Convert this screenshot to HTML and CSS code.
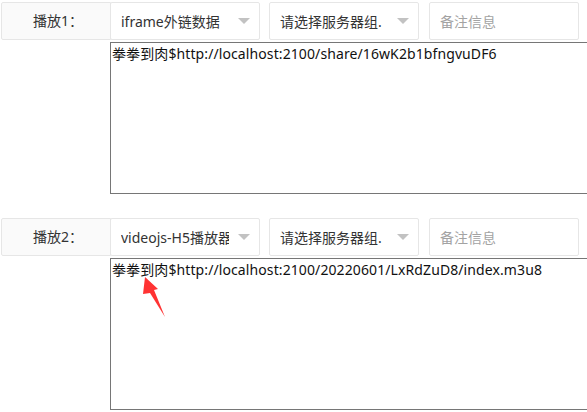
FILE: index.html
```html
<!DOCTYPE html>
<html lang="zh-CN">
<head>
    <meta charset="UTF-8">
    <title>播放设置</title>
    <link rel="stylesheet" href="styles.css">
</head>
<body>
    <div class="play-list">
        <div class="play-item">
            <div class="form-row">
                <label class="form-label">播放1：</label>
                <div class="select-box">
                    <input class="select-title" type="text" readonly value="iframe外链数据">
                    <i class="select-arrow"></i>
                </div>
                <div class="select-box">
                    <input class="select-title" type="text" readonly value="请选择服务器组.">
                    <i class="select-arrow"></i>
                </div>
                <input class="note-input" type="text" placeholder="备注信息">
            </div>
            <textarea class="play-url">拳拳到肉$http://localhost:2100/share/16wK2b1bfngvuDF6</textarea>
        </div>

        <div class="play-item">
            <div class="form-row">
                <label class="form-label">播放2：</label>
                <div class="select-box">
                    <input class="select-title" type="text" readonly value="videojs-H5播放器">
                    <i class="select-arrow"></i>
                </div>
                <div class="select-box">
                    <input class="select-title" type="text" readonly value="请选择服务器组.">
                    <i class="select-arrow"></i>
                </div>
                <input class="note-input" type="text" placeholder="备注信息">
            </div>
            <textarea class="play-url">拳拳到肉$http://localhost:2100/20220601/LxRdZuD8/index.m3u8</textarea>
        </div>
    </div>

    <!-- 标注箭头 -->
    <svg class="mark-arrow" width="30" height="46" viewBox="0 0 30 46">
        <polygon points="5,1 18,13 14,14 25,41 10,17 3,18" fill="#ff3333"/>
    </svg>
</body>
</html>
```

FILE: styles.css
```css
body {
    margin: 0;
    padding: 2px 0 0 1px;
    overflow: hidden;
    background: #fff;
    font-family: "Noto Sans", "Noto Sans CJK SC", sans-serif;
    font-size: 14px;
    color: #333;
}

.play-item {
    margin-bottom: 24px;
}

.play-item:last-child {
    margin-bottom: 0;
}

.form-row {
    display: flex;
    height: 38px;
    margin-bottom: 2px;
}

.form-label {
    box-sizing: border-box;
    width: 110px;
    height: 38px;
    line-height: 36px;
    padding-left: 4px;
    text-align: center;
    background: #fafafa;
    border: 1px solid #e6e6e6;
    border-radius: 2px 0 0 2px;
}

.select-box {
    position: relative;
    width: 150px;
    height: 38px;
    margin-left: -1px;
    margin-right: 10px;
}

.select-title,
.note-input {
    box-sizing: border-box;
    width: 150px;
    height: 38px;
    margin: 0;
    padding: 0 30px 0 10px;
    border: 1px solid #e6e6e6;
    border-radius: 2px;
    background: #fff;
    font-family: inherit;
    font-size: 14px;
    color: #333;
    outline: none;
}

.note-input {
    padding-right: 10px;
}

.note-input::placeholder {
    color: #a3a3a3;
}

.select-arrow {
    position: absolute;
    right: 10px;
    top: 16px;
    width: 0;
    height: 0;
    border-width: 6px 6px 0;
    border-style: solid;
    border-color: #c2c2c2 transparent transparent;
}

.play-url {
    display: block;
    box-sizing: border-box;
    width: 477px;
    height: 152px;
    margin: 0 0 0 109px;
    padding: 2px 1px;
    border: 1px solid #767676;
    border-right: none;
    border-radius: 0;
    font-family: inherit;
    font-size: 14px;
    line-height: 17px;
    letter-spacing: 0.1px;
    color: #111;
    resize: none;
    outline: none;
}

.mark-arrow {
    position: absolute;
    left: 140px;
    top: 276px;
}
```
